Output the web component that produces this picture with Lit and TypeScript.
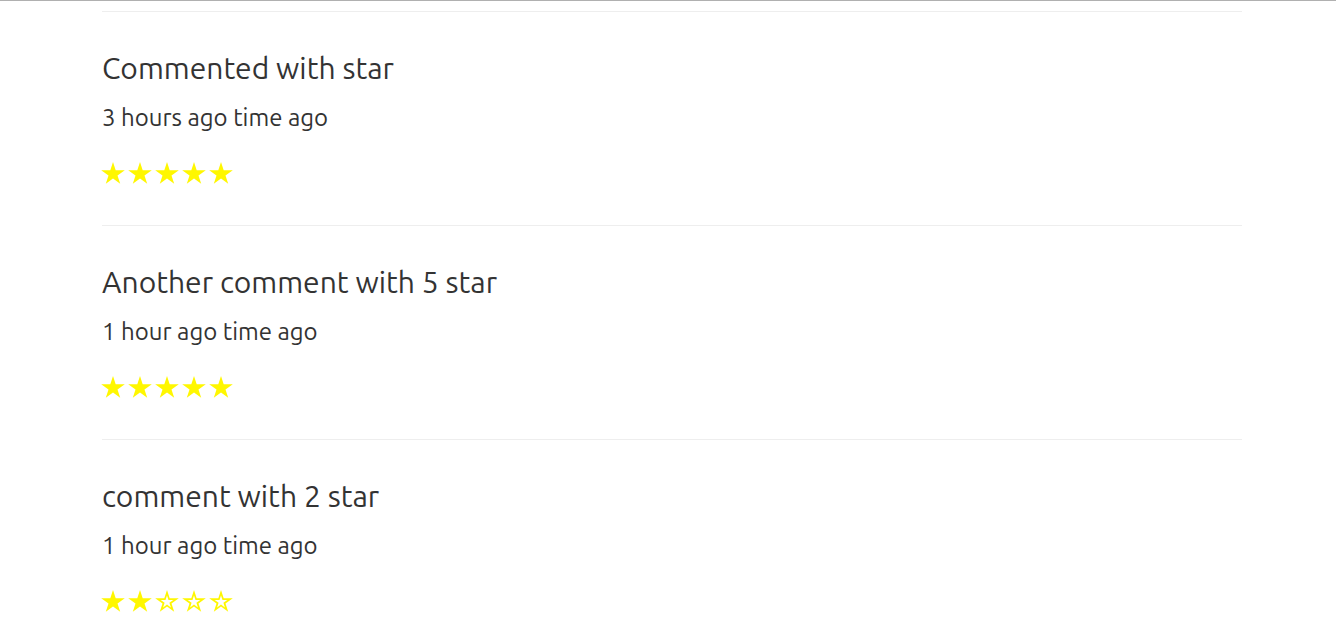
import { LitElement, html, css } from "lit";
import { customElement, property } from "lit/decorators.js";

interface Comment { text: string; time: string; stars: number }

const comments: Comment[] = [
  { text: "Commented with star", time: "3 hours ago time ago", stars: 5 },
  { text: "Another comment with 5 star", time: "1 hour ago time ago", stars: 5 },
  { text: "comment with 2 star", time: "1 hour ago time ago", stars: 2 },
];

const OUTLINE = "M12 0 14.7 8.2 23.8 8.2 16.5 13.4 19.2 21.8 12 16.6 4.8 21.8 7.5 13.4 0.2 8.2 9.3 8.2Z";
const HOLE = "M12 5.4 10.5 10 5.7 10 9.6 12.8 8.1 17.4 12 14.6 15.9 17.4 14.4 12.8 18.3 10 13.5 10Z";

@customElement("star-rating")
export class StarRating extends LitElement {
  @property({ type: Number }) value = 0;

  static styles = css`
    :host { display: block; }
    .stars { display: flex; gap: 3px; margin-left: -1px; color: #fff700; }
    .star { width: 24px; height: 22px; fill: currentColor; fill-rule: evenodd; }
  `;

  render() {
    return html`<div class="stars" role="img" aria-label="${this.value} of 5 stars">
      ${[1, 2, 3, 4, 5].map((n) => html`<svg class="star" viewBox="0 0 24 22" aria-hidden="true">
        <path d=${n <= this.value ? OUTLINE : OUTLINE + HOLE}></path>
      </svg>`)}
    </div>`;
  }
}

@customElement("app-root")
export class AppRoot extends LitElement {
  static styles = css`
    :host {
      display: block;
      padding: 10px 0 0 8px;
      background: #fff;
      color: #333;
      font-family: Ubuntu, "Noto Sans", sans-serif;
      border-top: 1px solid #b0b0b0;
    }
    .list { max-width: 1140px; margin: 0 auto; }
    .comment { border-top: 1px solid #eee; padding: 36px 0 41px; }
    .title { margin: 0 0 13px; font-size: 30px; line-height: 40px; font-weight: 400; }
    .time { margin: 0 0 27px; font-size: 24px; line-height: 34px; }
  `;

  render() {
    return html`<main class="list">
      ${comments.map((c) => html`<article class="comment">
        <h2 class="title">${c.text}</h2>
        <p class="time">${c.time}</p>
        <star-rating .value=${c.stars}></star-rating>
      </article>`)}
    </main>`;
  }
}
